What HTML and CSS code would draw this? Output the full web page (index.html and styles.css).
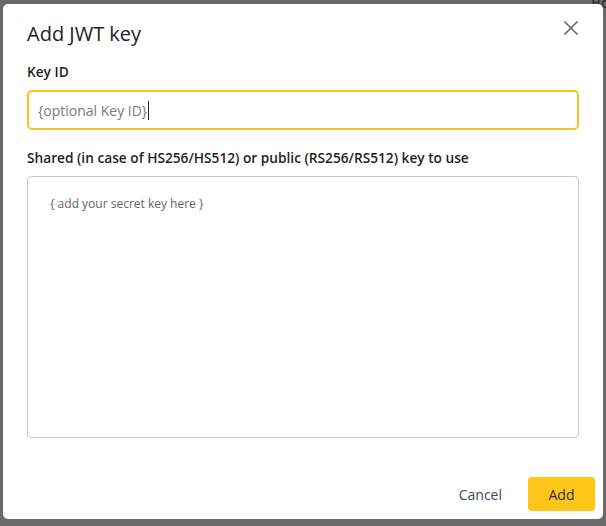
FILE: index.html
```html
<!DOCTYPE html>
<html lang="en">
<head>
<meta charset="utf-8">
<title>Add JWT key</title>
<link rel="stylesheet" href="styles.css">
</head>
<body>
<div class="page">
  <div class="page-top">Bo</div>
  <div class="page-bottom">will purge all the changes made to the CDN, which will take a while if content is cached with the</div>
</div>
<div class="overlay">
  <div class="modal" role="dialog" aria-labelledby="modal-title">
    <div class="modal-head">
      <h2 class="modal-title" id="modal-title">Add JWT key</h2>
      <button class="close" type="button" aria-label="Close">
        <svg width="14" height="14" viewBox="0 0 14 14" aria-hidden="true"><path d="M1 1 L13 13 M13 1 L1 13" stroke="#6b6b6b" stroke-width="1.6" fill="none" stroke-linecap="square"/></svg>
      </button>
    </div>
    <label class="label label-first" for="kid">Key ID</label>
    <div class="input"><span class="input-text">{optional Key ID}</span><span class="caret"></span></div>
    <label class="label label-second">Shared (in case of HS256/HS512) or public (RS256/RS512) key to use</label>
    <div class="textarea"><span class="ta-placeholder">{ add your secret key here }</span></div>
    <div class="modal-foot">
      <button class="btn-cancel" type="button">Cancel</button>
      <button class="btn-add" type="button">Add</button>
    </div>
  </div>
</div>
</body>
</html>
```
FILE: styles.css
```css
* { box-sizing: border-box; }
html, body { margin: 0; padding: 0; }
body {
  width: 606px;
  height: 526px;
  overflow: hidden;
  background: #6a6a6a;
  font-family: "Open Sans", "Liberation Sans", sans-serif;
  position: relative;
}
.page {
  height: 526px;
  display: flex;
  flex-direction: column;
  justify-content: space-between;
  color: #2b2f36;
  font-size: 15px;
}
.page-top {
  align-self: flex-end;
  margin-top: -8px;
  margin-right: -4px;
  font-weight: 600;
}
.page-bottom {
  margin-bottom: -15px;
  padding-left: 30px;
  white-space: nowrap;
  font-size: 15px;
  line-height: 20px;
}
.overlay {
  position: absolute;
  inset: 0;
}
.modal {
  position: absolute;
  left: 3px;
  top: 4px;
  width: 600px;
  height: 515px;
  background: #ffffff;
  border-radius: 5px;
  padding: 16px 8px 8px 24px;
  display: flex;
  flex-direction: column;
}
.modal-head {
  display: flex;
  align-items: flex-start;
  justify-content: space-between;
  padding-right: 17px;
}
.modal-title {
  margin: 0;
  font-size: 20px;
  line-height: 28px;
  font-weight: 500;
  color: #222222;
}
.close {
  border: 0;
  background: none;
  padding: 0;
  margin-top: 1px;
  width: 14px;
  height: 14px;
  display: flex;
  cursor: pointer;
}
.label {
  display: block;
  font-size: 13.7px;
  line-height: 18px;
  font-weight: 600;
  color: #1f1f1f;
}
.label-first { margin-top: 15px; }
.label-second { margin-top: 19px; }
.input {
  margin-top: 9px;
  width: 552px;
  height: 40px;
  border: 2px solid #fcc419;
  border-radius: 5px;
  padding: 0 9px;
  display: flex;
  align-items: center;
  font-size: 14px;
  color: #7a7a7a;
}
.caret {
  display: inline-block;
  width: 1px;
  height: 19px;
  background: #222;
  margin-left: 1px;
}
.textarea {
  margin-top: 9px;
  width: 552px;
  height: 262px;
  border: 1px solid #c8c8c8;
  border-radius: 4px;
  padding: 19px 22px;
}
.ta-placeholder {
  display: block;
  font-size: 12px;
  line-height: 16px;
  color: #666666;
}
.modal-foot {
  margin-top: auto;
  display: flex;
  justify-content: flex-end;
  align-items: center;
  gap: 26px;
}
.btn-cancel {
  border: 0;
  background: none;
  padding: 0;
  font-family: inherit;
  font-size: 14px;
  font-weight: 500;
  color: #3b4a5b;
}
.btn-add {
  border: 0;
  width: 67px;
  height: 34px;
  border-radius: 4px;
  background: #ffc519;
  font-family: inherit;
  font-size: 14px;
  font-weight: 500;
  color: #2d3440;
}
```
